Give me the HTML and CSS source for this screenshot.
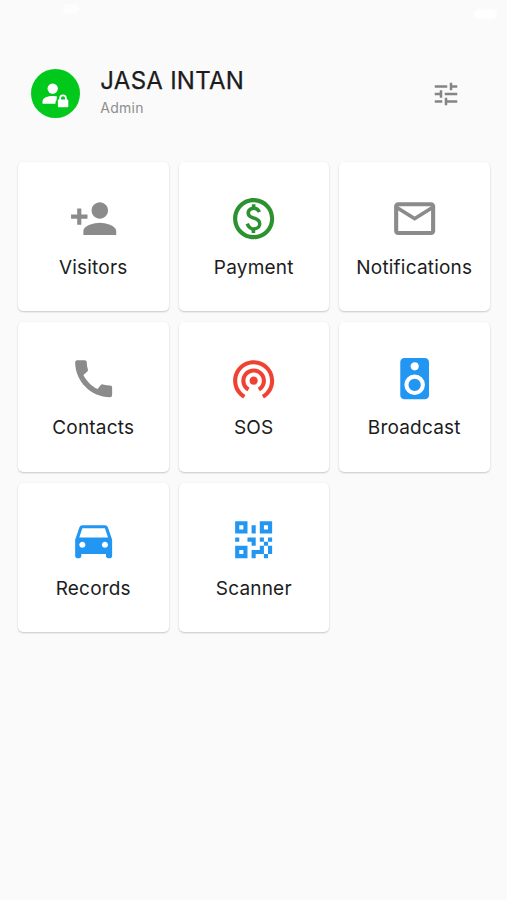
FILE: index.html
```html
<!DOCTYPE html>
<html lang="en">
<head>
<meta charset="utf-8">
<title>Home</title>
<link rel="stylesheet" href="styles.css">
</head>
<body>
<div class="status"><i class="clock"></i><i class="battery"></i></div>
<header class="header">
  <div class="avatar"><svg viewBox="0 0 49 49"><circle cx="21.7" cy="19.6" r="5.2"/><path d="M11.5 34.7v-2.2c0-3.9 5.5-5.4 10.2-5.4 1.8 0 3 .2 4.4.6-.5 1.200-.4 2.200-.4 3.200-1.200.8-1.200 1.800-1.200 3.800z"/><path fill-rule="evenodd" d="M27.500 30.500h.7v-1.200a3.800 3.800 0 0 1 7.600 0v1.200h.7q.8 0 .8.8v6.200q0 .8-.8.8h-8.800q-.8 0-.8-.8v-6.200q0-.8.6-.8zm2.500 0h4v-1.200a2 2 0 0 0-4 0z"/></svg></div>
  <div class="who"><h1 class="name">JASA INTAN</h1><p class="role">Admin</p></div>
  <svg class="tune" viewBox="0 0 24 24"><path d="M3 17v2h6v-2H3zM3 5v2h10V5H3zm10 16v-2h8v-2h-8v-2h-2v6h2zM7 9v2H3v2h4v2h2V9H7zm14 4v-2H11v2h10zm-6-4h2V7h4V5h-4V3h-2v6z"/></svg>
</header>
<main class="grid">
  <section class="card"><svg class="icon gray" viewBox="0 0 24 24"><path d="M15 12c2.210 0 4-1.790 4-4s-1.790-4-4-4-4 1.790-4 4 1.790 4 4 4zm-9-2V7H4v3H1v2h3v3h2v-3h3v-2H6zm9 4c-2.670 0-8 1.340-8 4v2h16v-2c0-2.660-5.330-4-8-4z"/></svg><span class="label">Visitors</span></section>
  <section class="card"><svg class="icon green" viewBox="0 0 24 24"><path d="M12 2C6.480 2 2 6.480 2 12s4.480 10 10 10 10-4.480 10-10S17.520 2 12 2zM12 20c-4.410 0-8-3.590-8-8s3.590-8 8-8 8 3.590 8 8-3.590 8-8 8zm.89-8.900c-1.780-.59-2.640-.96-2.640-1.900 0-1.020 1.110-1.390 1.810-1.390 1.310 0 1.790.99 1.900 1.340l1.580-.67c-.15-.44-.82-1.910-2.660-2.230V5h-1.750v1.260c-2.600.56-2.620 2.850-2.620 2.960 0 2.270 2.250 2.910 3.350 3.310 1.580.56 2.280 1.070 2.280 2.030 0 1.130-1.050 1.610-1.980 1.610-1.820 0-2.340-1.870-2.400-2.090l-1.660.67c.63 2.190 2.280 2.780 2.900 2.960V19h1.750v-1.240c.52-.09 3.020-.59 3.020-3.220.01-1.390-.6-2.610-2.880-3.440z"/></svg><span class="label">Payment</span></section>
  <section class="card"><svg class="icon gray" viewBox="0 0 24 24"><path d="M22 6c0-1.100-.9-2-2-2H4c-1.100 0-2 .9-2 2v12c0 1.100.9 2 2 2h16c1.100 0 2-.9 2-2V6zm-2 0l-8 5-8-5h16zm0 12H4V8l8 5 8-5v10z"/></svg><span class="label">Notifications</span></section>
  <section class="card"><svg class="icon gray" viewBox="0 0 24 24"><path d="M20.010 15.380c-1.230 0-2.420-.2-3.530-.56-.35-.12-.74-.03-1.010.24l-1.570 1.970c-2.830-1.350-5.480-3.900-6.890-6.830l1.950-1.660c.27-.28.35-.67.24-1.020-.37-1.110-.56-2.300-.56-3.530 0-.54-.45-.99-.99-.99H4.190C3.650 3 3 3.240 3 3.990 3 13.280 10.730 21 20.010 21c.71 0 .99-.63.99-1.180v-3.450c0-.54-.45-.99-.99-.99z"/></svg><span class="label">Contacts</span></section>
  <section class="card"><svg class="icon red" viewBox="0 0 24 24"><path d="M12 11c-1.100 0-2 .9-2 2s.9 2 2 2 2-.9 2-2-.9-2-2-2zm6 2c0-3.310-2.690-6-6-6s-6 2.690-6 6c0 2.220 1.210 4.150 3 5.190l1-1.740c-1.190-.7-2-1.970-2-3.450 0-2.210 1.790-4 4-4s4 1.790 4 4c0 1.480-.81 2.750-2 3.450l1 1.740c1.790-1.040 3-2.970 3-5.190zM12 3C6.480 3 2 7.480 2 13c0 3.700 2.010 6.920 4.990 8.650l1-1.730C5.610 18.530 4 15.960 4 13c0-4.420 3.580-8 8-8s8 3.580 8 8c0 2.960-1.610 5.530-4 6.920l1 1.730c2.990-1.730 5-4.950 5-8.650 0-5.520-4.480-10-10-10z"/></svg><span class="label">SOS</span></section>
  <section class="card"><svg class="icon blue" viewBox="0 0 24 24"><path d="M12,12A3,3 0 0,0 9,15A3,3 0 0,0 12,18A3,3 0 0,0 15,15A3,3 0 0,0 12,12M12,20A5,5 0 0,1 7,15A5,5 0 0,1 12,10A5,5 0 0,1 17,15A5,5 0 0,1 12,20M12,4A2,2 0 0,1 14,6A2,2 0 0,1 12,8C10.890,8 10,7.100 10,6C10,4.890 10.890,4 12,4M17,2H7C5.890,2 5,2.890 5,4V20A2,2 0 0,0 7,22H17A2,2 0 0,0 19,20V4C19,2.890 18.100,2 17,2Z"/></svg><span class="label">Broadcast</span></section>
  <section class="card"><svg class="icon blue" viewBox="0 0 24 24"><path d="M18.920 6.010C18.720 5.420 18.160 5 17.500 5h-11c-.66 0-1.210.42-1.420 1.010L3 12v8c0 .55.45 1 1 1h1c.55 0 1-.45 1-1v-1h12v1c0 .55.45 1 1 1h1c.55 0 1-.45 1-1v-8l-2.080-5.990zM6.500 16c-.83 0-1.500-.67-1.500-1.500S5.670 13 6.500 13s1.500.67 1.500 1.500S7.330 16 6.500 16zm11 0c-.83 0-1.500-.67-1.500-1.500s.67-1.500 1.500-1.500 1.500.67 1.500 1.500-.67 1.500-1.500 1.500zM5 11l1.500-4.500h11L19 11H5z"/></svg><span class="label">Records</span></section>
  <section class="card"><svg class="icon blue" viewBox="0 0 24 24"><path d="M3,11H5V13H3V11M11,5H13V9H11V5M9,11H13V15H11V13H9V11M15,11H17V13H19V11H21V13H19V15H21V19H19V21H17V19H13V21H11V17H15V15H17V13H15V11M19,19V15H17V19H19M15,3H21V9H15V3M17,5V7H19V5H17M3,3H9V9H3V3M5,5V7H7V5H5M3,15H9V21H3V15M5,17V19H7V17H5Z"/></svg><span class="label">Scanner</span></section>
</main>
</body>
</html>
```
FILE: styles.css
```css
* { box-sizing: border-box; }
body {
  margin: 0;
  height: 900px;
  overflow: hidden;
  background: #fafafa;
  color: #1c1c1c;
  font-family: Inter, Roboto, sans-serif;
}
svg { display: block; fill: currentColor; }
.status {
  height: 28px;
  padding: 4px 10px 0 63px;
  display: flex;
  justify-content: space-between;
}
.clock { width: 16px; height: 10px; border-radius: 5px; background: #fdfdfd; filter: blur(1px); }
.battery { width: 23px; height: 10px; margin-top: 5px; border-radius: 5px; background: #fff; filter: blur(1px); }
.header {
  height: 133.6px;
  padding: 41px 47px 0 31.3px;
  display: flex;
  align-items: flex-start;
}
.avatar { width: 49px; height: 49px; border-radius: 50%; background: #00c91b; color: #fff; }
.who { flex: 1; margin-left: 20px; }
.name {
  margin: -4px 0 0;
  font-size: 24px;
  line-height: 32px;
  font-weight: 400;
  letter-spacing: 0.27px;
  white-space: nowrap;
  -webkit-text-stroke: 0.25px currentColor;
}
.role { margin: 1px 0 0; font-size: 14px; line-height: 20px; color: #8e8e8e; letter-spacing: 0.25px; }
.tune { width: 30px; height: 30px; margin: 10px -1.1px 0 0; color: #858585; }
.grid {
  padding: 0 17.5px 0 18px;
  display: grid;
  grid-template-columns: repeat(3, 150.5px);
  grid-auto-rows: 149.5px;
  column-gap: 10px;
  row-gap: 11px;
}
.card {
  padding-top: 32px;
  display: flex;
  flex-direction: column;
  align-items: center;
  border-radius: 5px;
  background: #fff;
  box-shadow: 0 1px 2px rgba(0, 0, 0, 0.2), 0 0 2px rgba(0, 0, 0, 0.03);
}
.icon { width: 49.3px; height: 49.3px; }
.label { margin-top: 12px; font-size: 19px; line-height: 26px; letter-spacing: 0.2px; white-space: nowrap; }
.gray { color: #8b8b8b; }
.green { color: #2b922f; }
.red { color: #f04233; }
.blue { color: #2196f3; }
```
